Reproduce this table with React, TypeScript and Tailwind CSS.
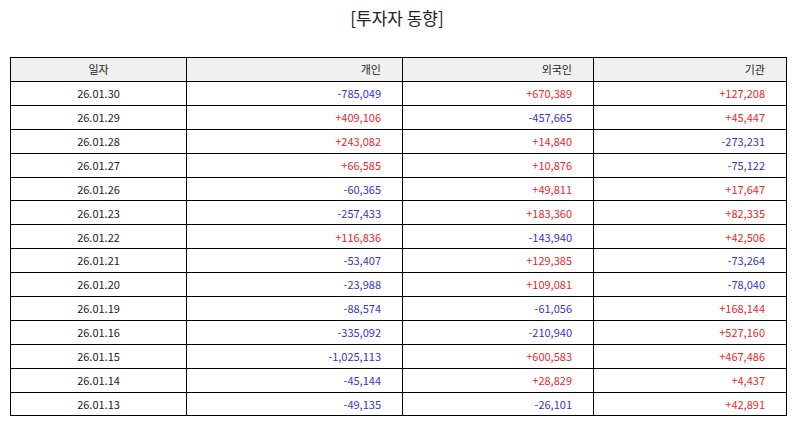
const rows: [string, string, string, string][] = [
  ["26.01.30", "-785,049", "+670,389", "+127,208"],
  ["26.01.29", "+409,106", "-457,665", "+45,447"],
  ["26.01.28", "+243,082", "+14,840", "-273,231"],
  ["26.01.27", "+66,585", "+10,876", "-75,122"],
  ["26.01.26", "-60,365", "+49,811", "+17,647"],
  ["26.01.23", "-257,433", "+183,360", "+82,335"],
  ["26.01.22", "+116,836", "-143,940", "+42,506"],
  ["26.01.21", "-53,407", "+129,385", "-73,264"],
  ["26.01.20", "-23,988", "+109,081", "-78,040"],
  ["26.01.19", "-88,574", "-61,056", "+168,144"],
  ["26.01.16", "-335,092", "-210,940", "+527,160"],
  ["26.01.15", "-1,025,113", "+600,583", "+467,486"],
  ["26.01.14", "-45,144", "+28,829", "+4,437"],
  ["26.01.13", "-49,135", "-26,101", "+42,891"],
]

const Num = ({ v }: { v: string }) => (
  <td className={`border-[1.5px] border-black text-right pr-[21px] ${v.startsWith("-") ? "text-[#3535cc]" : "text-[#e82a2a]"}`}>
    {v}
  </td>
)

const App = () => {
  return (
    <div className="w-[794px] h-[425px] bg-white font-['Noto_Sans_CJK_KR','Noto_Sans',sans-serif] text-[#222]">
      <h1 className="pt-[5px] h-[57px] text-center text-[17px] leading-[26px]">[투자자 동향]</h1>
      <div className="px-[10px]">
        <table className="w-[776px] border-collapse text-[11px] table-fixed">
          <colgroup>
            <col className="w-[176px]" />
            <col className="w-[216px]" />
            <col className="w-[191px]" />
            <col className="w-[193px]" />
          </colgroup>
          <thead>
            <tr className="h-[24px] bg-[#f0f0f0]">
              <th className="border-[1.5px] border-black font-normal text-center">일자</th>
              <th className="border-[1.5px] border-black font-normal text-right pr-[21px]">개인</th>
              <th className="border-[1.5px] border-black font-normal text-right pr-[21px]">외국인</th>
              <th className="border-[1.5px] border-black font-normal text-right pr-[21px]">기관</th>
            </tr>
          </thead>
          <tbody>
            {rows.map((r) => (
              <tr key={r[0]} className="h-[23.9px]">
                <td className="border-[1.5px] border-black text-center">{r[0]}</td>
                <Num v={r[1]} />
                <Num v={r[2]} />
                <Num v={r[3]} />
              </tr>
            ))}
          </tbody>
        </table>
      </div>
    </div>
  )
}

export default App
